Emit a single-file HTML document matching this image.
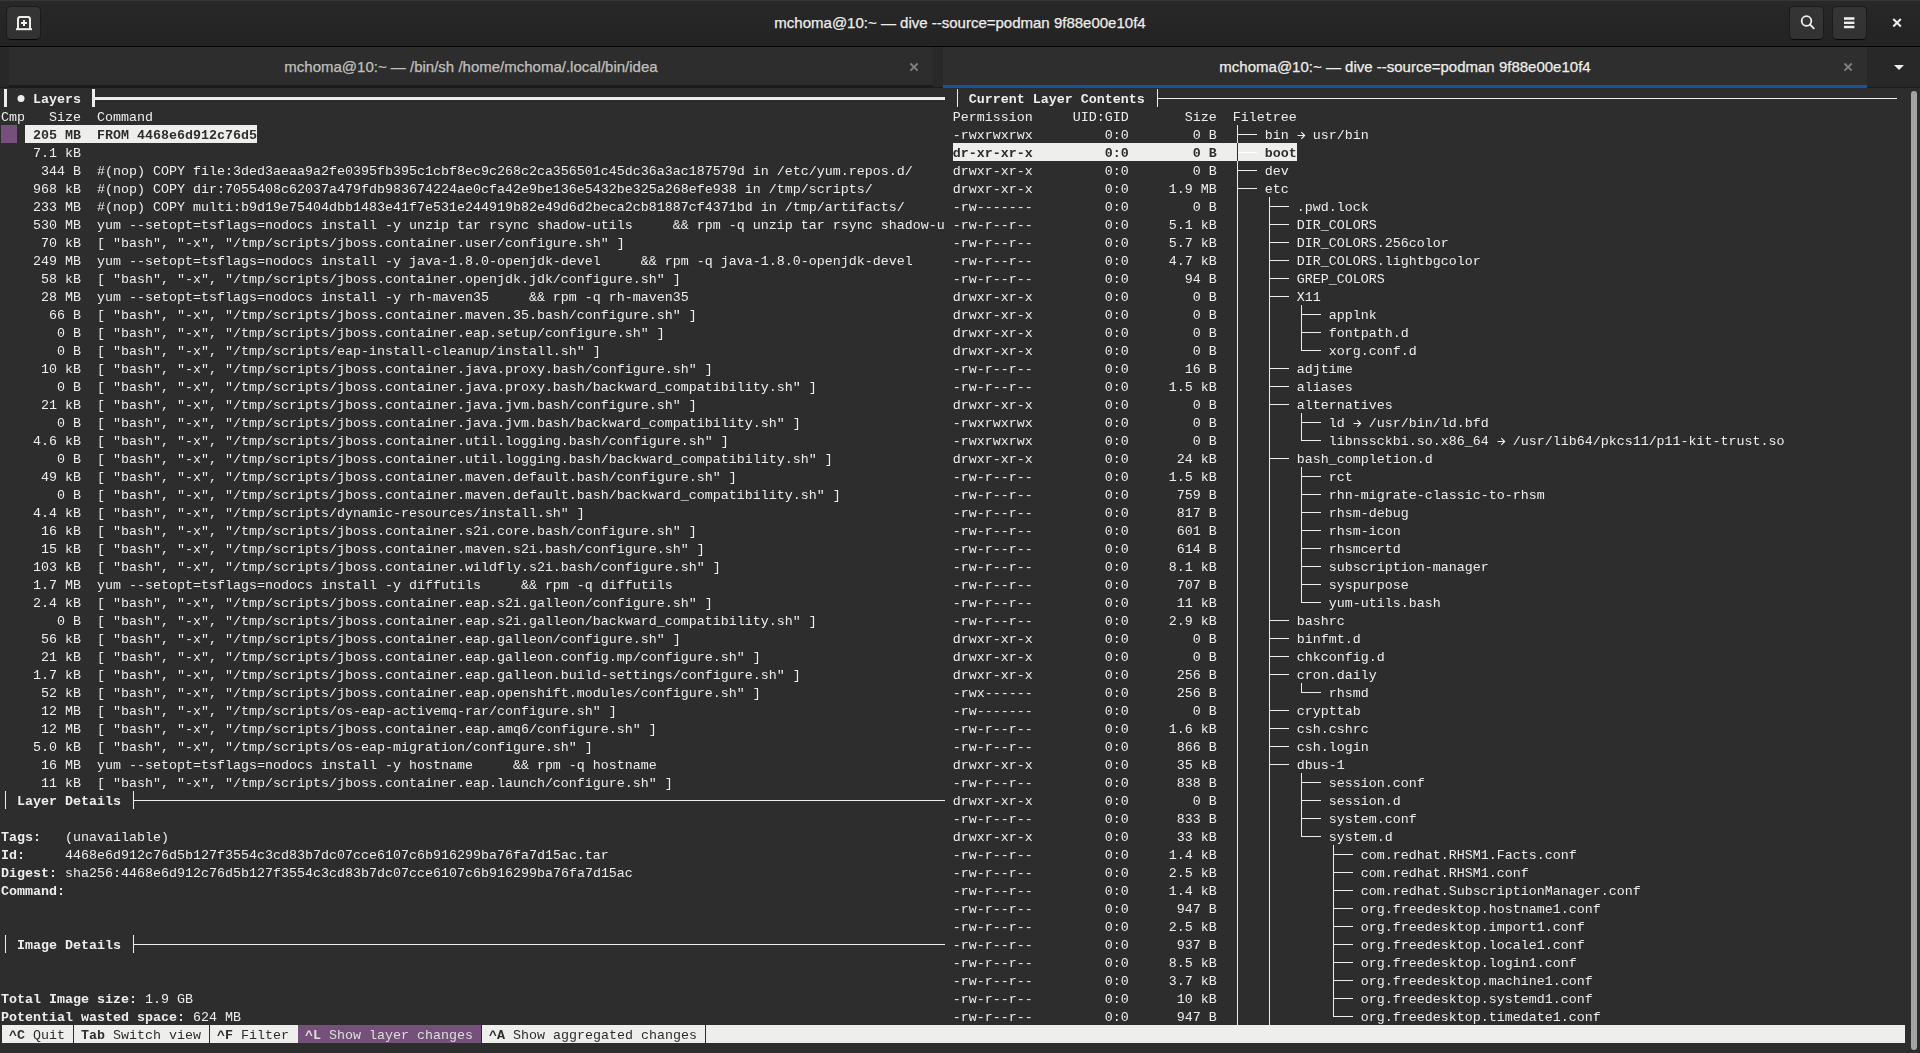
<!DOCTYPE html>
<html><head><meta charset="utf-8">
<style>
html,body{margin:0;padding:0;}
body{width:1920px;height:1053px;overflow:hidden;position:relative;background:#2d2d2d;font-family:"Liberation Sans",sans-serif;}
#hb{position:absolute;left:0;top:0;width:1920px;height:46px;background:linear-gradient(to top,#232323,#282828);border-bottom:1px solid #070707;box-shadow:inset 0 1px rgba(238,238,236,0.07);}
.btn{position:absolute;top:6px;width:33px;height:32px;border:1px solid #1b1b1b;border-bottom-color:#070707;border-radius:5px;background:linear-gradient(to top,#323232 2px,#353535);box-sizing:content-box;}
#title{position:absolute;left:0;top:0;width:1920px;height:46px;line-height:46px;text-align:center;color:#eeeeec;font-size:15px;-webkit-text-stroke:0.25px #eeeeec;}
#tabs{position:absolute;left:0;top:47px;width:1920px;height:41px;background:#282828;box-shadow:inset 0 -1px #1b1b1b;}
.tab{position:absolute;top:0;height:41px;background:#2d2d2d;}
.tabt{position:absolute;top:0;height:38px;line-height:40px;text-align:center;color:#eeeeec;font-size:15px;-webkit-text-stroke:0.25px currentColor;}
#term{position:absolute;left:0;top:88px;width:1920px;height:965px;background:#2d2d2d;}
.row{position:absolute;left:1px;height:18px;line-height:18px;padding-top:2px;white-space:pre;font-family:"Liberation Mono",monospace;font-size:13.332px;color:#eeeeec;}
.b{font-weight:bold;}
.bg{position:absolute;height:18px;}
svg{position:absolute;left:0;top:0;}
</style></head><body>
<div id="hb">
  <div class="btn" style="left:6px"></div>
  <svg width="48" height="46" style="left:0;top:0">
    <path d="M18 29 V19.2 a2.2 2.2 0 0 1 2.2 -2.2 h7.6 a2.2 2.2 0 0 1 2.2 2.2 V29" fill="none" stroke="#eeeeec" stroke-width="2"/>
    <rect x="16" y="28.2" width="16" height="2" fill="#eeeeec"/>
    <rect x="21" y="22" width="6" height="2" fill="#eeeeec"/>
    <rect x="23" y="20" width="2" height="6" fill="#eeeeec"/>
  </svg>
  <div id="title">mchoma@10:~ — dive --source=podman 9f88e00e10f4</div>
  <div class="btn" style="left:1789px"></div>
  <div class="btn" style="left:1832px"></div>
  <svg width="1920" height="46" style="left:0;top:0">
    <g fill="none" stroke="#eeeeec" stroke-width="1.8">
      <circle cx="1806.5" cy="21" r="4.8"/>
      <path d="M1810 24.5 L1813.8 28.3" stroke-linecap="round"/>
    </g>
    <rect x="1844" y="17.2" width="10.4" height="2.6" fill="#eeeeec"/>
    <rect x="1844" y="21.6" width="10.4" height="2.4" fill="#eeeeec"/>
    <rect x="1844" y="25.8" width="10.4" height="2.4" fill="#eeeeec"/>
    <path d="M1893.3 19 L1900.8 26.5 M1900.8 19 L1893.3 26.5" stroke="#eeeeec" stroke-width="2" fill="none"/>
  </svg>
</div>
<div id="tabs">
  <div class="tab" style="left:9px;width:924px;border-bottom:3px solid #1b1b1b;height:38px"></div>
  <div class="tabt" style="left:9px;width:924px;color:#c0c0bd">mchoma@10:~ — /bin/sh /home/mchoma/.local/bin/idea</div>
  <div class="tab" style="left:943px;width:924px;border-bottom:3px solid #15539e;height:38px;background:#2e2e2e"></div>
  <div class="tabt" style="left:943px;width:924px">mchoma@10:~ — dive --source=podman 9f88e00e10f4</div>
  <svg width="1920" height="41" style="left:0;top:0">
    <path d="M910.4 16.5 L917.6 23.7 M917.6 16.5 L910.4 23.7" stroke="#828282" stroke-width="1.8" fill="none"/>
    <path d="M1844.5 16.5 L1851.7 23.7 M1851.7 16.5 L1844.5 23.7" stroke="#828282" stroke-width="1.8" fill="none"/>
    <path d="M1894 18 L1904 18 L1899 23 Z" fill="#eeeeec"/>
  </svg>
</div>
<div id="term">
</div>
<div class="bg" style="left:1px;top:125px;width:16px;background:#75507b"></div>
<div class="bg" style="left:25px;top:125px;width:232px;background:#eeeeec"></div>
<div class="bg" style="left:953px;top:143px;width:344px;background:#eeeeec"></div>
<div class="bg" style="left:1px;top:1025px;width:296px;background:#eeeeec"></div>
<div class="bg" style="left:297px;top:1025px;width:184px;background:#75507b"></div>
<div class="bg" style="left:481px;top:1025px;width:1424px;background:#eeeeec"></div>
<svg width="1920" height="1053" shape-rendering="crispEdges">
<circle cx="21" cy="98.5" r="3.5" fill="#eeeeec" shape-rendering="geometricPrecision"/>
<rect x="4" y="89" width="3" height="18" fill="#eeeeec"/>
<rect x="92" y="89" width="3" height="18" fill="#eeeeec"/>
<rect x="95" y="97" width="2" height="3" fill="#eeeeec"/>
<rect x="97" y="97" width="8" height="3" fill="#eeeeec"/>
<rect x="105" y="97" width="8" height="3" fill="#eeeeec"/>
<rect x="113" y="97" width="8" height="3" fill="#eeeeec"/>
<rect x="121" y="97" width="8" height="3" fill="#eeeeec"/>
<rect x="129" y="97" width="8" height="3" fill="#eeeeec"/>
<rect x="137" y="97" width="8" height="3" fill="#eeeeec"/>
<rect x="145" y="97" width="8" height="3" fill="#eeeeec"/>
<rect x="153" y="97" width="8" height="3" fill="#eeeeec"/>
<rect x="161" y="97" width="8" height="3" fill="#eeeeec"/>
<rect x="169" y="97" width="8" height="3" fill="#eeeeec"/>
<rect x="177" y="97" width="8" height="3" fill="#eeeeec"/>
<rect x="185" y="97" width="8" height="3" fill="#eeeeec"/>
<rect x="193" y="97" width="8" height="3" fill="#eeeeec"/>
<rect x="201" y="97" width="8" height="3" fill="#eeeeec"/>
<rect x="209" y="97" width="8" height="3" fill="#eeeeec"/>
<rect x="217" y="97" width="8" height="3" fill="#eeeeec"/>
<rect x="225" y="97" width="8" height="3" fill="#eeeeec"/>
<rect x="233" y="97" width="8" height="3" fill="#eeeeec"/>
<rect x="241" y="97" width="8" height="3" fill="#eeeeec"/>
<rect x="249" y="97" width="8" height="3" fill="#eeeeec"/>
<rect x="257" y="97" width="8" height="3" fill="#eeeeec"/>
<rect x="265" y="97" width="8" height="3" fill="#eeeeec"/>
<rect x="273" y="97" width="8" height="3" fill="#eeeeec"/>
<rect x="281" y="97" width="8" height="3" fill="#eeeeec"/>
<rect x="289" y="97" width="8" height="3" fill="#eeeeec"/>
<rect x="297" y="97" width="8" height="3" fill="#eeeeec"/>
<rect x="305" y="97" width="8" height="3" fill="#eeeeec"/>
<rect x="313" y="97" width="8" height="3" fill="#eeeeec"/>
<rect x="321" y="97" width="8" height="3" fill="#eeeeec"/>
<rect x="329" y="97" width="8" height="3" fill="#eeeeec"/>
<rect x="337" y="97" width="8" height="3" fill="#eeeeec"/>
<rect x="345" y="97" width="8" height="3" fill="#eeeeec"/>
<rect x="353" y="97" width="8" height="3" fill="#eeeeec"/>
<rect x="361" y="97" width="8" height="3" fill="#eeeeec"/>
<rect x="369" y="97" width="8" height="3" fill="#eeeeec"/>
<rect x="377" y="97" width="8" height="3" fill="#eeeeec"/>
<rect x="385" y="97" width="8" height="3" fill="#eeeeec"/>
<rect x="393" y="97" width="8" height="3" fill="#eeeeec"/>
<rect x="401" y="97" width="8" height="3" fill="#eeeeec"/>
<rect x="409" y="97" width="8" height="3" fill="#eeeeec"/>
<rect x="417" y="97" width="8" height="3" fill="#eeeeec"/>
<rect x="425" y="97" width="8" height="3" fill="#eeeeec"/>
<rect x="433" y="97" width="8" height="3" fill="#eeeeec"/>
<rect x="441" y="97" width="8" height="3" fill="#eeeeec"/>
<rect x="449" y="97" width="8" height="3" fill="#eeeeec"/>
<rect x="457" y="97" width="8" height="3" fill="#eeeeec"/>
<rect x="465" y="97" width="8" height="3" fill="#eeeeec"/>
<rect x="473" y="97" width="8" height="3" fill="#eeeeec"/>
<rect x="481" y="97" width="8" height="3" fill="#eeeeec"/>
<rect x="489" y="97" width="8" height="3" fill="#eeeeec"/>
<rect x="497" y="97" width="8" height="3" fill="#eeeeec"/>
<rect x="505" y="97" width="8" height="3" fill="#eeeeec"/>
<rect x="513" y="97" width="8" height="3" fill="#eeeeec"/>
<rect x="521" y="97" width="8" height="3" fill="#eeeeec"/>
<rect x="529" y="97" width="8" height="3" fill="#eeeeec"/>
<rect x="537" y="97" width="8" height="3" fill="#eeeeec"/>
<rect x="545" y="97" width="8" height="3" fill="#eeeeec"/>
<rect x="553" y="97" width="8" height="3" fill="#eeeeec"/>
<rect x="561" y="97" width="8" height="3" fill="#eeeeec"/>
<rect x="569" y="97" width="8" height="3" fill="#eeeeec"/>
<rect x="577" y="97" width="8" height="3" fill="#eeeeec"/>
<rect x="585" y="97" width="8" height="3" fill="#eeeeec"/>
<rect x="593" y="97" width="8" height="3" fill="#eeeeec"/>
<rect x="601" y="97" width="8" height="3" fill="#eeeeec"/>
<rect x="609" y="97" width="8" height="3" fill="#eeeeec"/>
<rect x="617" y="97" width="8" height="3" fill="#eeeeec"/>
<rect x="625" y="97" width="8" height="3" fill="#eeeeec"/>
<rect x="633" y="97" width="8" height="3" fill="#eeeeec"/>
<rect x="641" y="97" width="8" height="3" fill="#eeeeec"/>
<rect x="649" y="97" width="8" height="3" fill="#eeeeec"/>
<rect x="657" y="97" width="8" height="3" fill="#eeeeec"/>
<rect x="665" y="97" width="8" height="3" fill="#eeeeec"/>
<rect x="673" y="97" width="8" height="3" fill="#eeeeec"/>
<rect x="681" y="97" width="8" height="3" fill="#eeeeec"/>
<rect x="689" y="97" width="8" height="3" fill="#eeeeec"/>
<rect x="697" y="97" width="8" height="3" fill="#eeeeec"/>
<rect x="705" y="97" width="8" height="3" fill="#eeeeec"/>
<rect x="713" y="97" width="8" height="3" fill="#eeeeec"/>
<rect x="721" y="97" width="8" height="3" fill="#eeeeec"/>
<rect x="729" y="97" width="8" height="3" fill="#eeeeec"/>
<rect x="737" y="97" width="8" height="3" fill="#eeeeec"/>
<rect x="745" y="97" width="8" height="3" fill="#eeeeec"/>
<rect x="753" y="97" width="8" height="3" fill="#eeeeec"/>
<rect x="761" y="97" width="8" height="3" fill="#eeeeec"/>
<rect x="769" y="97" width="8" height="3" fill="#eeeeec"/>
<rect x="777" y="97" width="8" height="3" fill="#eeeeec"/>
<rect x="785" y="97" width="8" height="3" fill="#eeeeec"/>
<rect x="793" y="97" width="8" height="3" fill="#eeeeec"/>
<rect x="801" y="97" width="8" height="3" fill="#eeeeec"/>
<rect x="809" y="97" width="8" height="3" fill="#eeeeec"/>
<rect x="817" y="97" width="8" height="3" fill="#eeeeec"/>
<rect x="825" y="97" width="8" height="3" fill="#eeeeec"/>
<rect x="833" y="97" width="8" height="3" fill="#eeeeec"/>
<rect x="841" y="97" width="8" height="3" fill="#eeeeec"/>
<rect x="849" y="97" width="8" height="3" fill="#eeeeec"/>
<rect x="857" y="97" width="8" height="3" fill="#eeeeec"/>
<rect x="865" y="97" width="8" height="3" fill="#eeeeec"/>
<rect x="873" y="97" width="8" height="3" fill="#eeeeec"/>
<rect x="881" y="97" width="8" height="3" fill="#eeeeec"/>
<rect x="889" y="97" width="8" height="3" fill="#eeeeec"/>
<rect x="897" y="97" width="8" height="3" fill="#eeeeec"/>
<rect x="905" y="97" width="8" height="3" fill="#eeeeec"/>
<rect x="913" y="97" width="8" height="3" fill="#eeeeec"/>
<rect x="921" y="97" width="8" height="3" fill="#eeeeec"/>
<rect x="929" y="97" width="8" height="3" fill="#eeeeec"/>
<rect x="937" y="97" width="8" height="3" fill="#eeeeec"/>
<rect x="957" y="89" width="1" height="18" fill="#eeeeec"/>
<rect x="1157" y="89" width="1" height="18" fill="#eeeeec"/>
<rect x="1158" y="98" width="3" height="1" fill="#eeeeec"/>
<rect x="1161" y="98" width="8" height="1" fill="#eeeeec"/>
<rect x="1169" y="98" width="8" height="1" fill="#eeeeec"/>
<rect x="1177" y="98" width="8" height="1" fill="#eeeeec"/>
<rect x="1185" y="98" width="8" height="1" fill="#eeeeec"/>
<rect x="1193" y="98" width="8" height="1" fill="#eeeeec"/>
<rect x="1201" y="98" width="8" height="1" fill="#eeeeec"/>
<rect x="1209" y="98" width="8" height="1" fill="#eeeeec"/>
<rect x="1217" y="98" width="8" height="1" fill="#eeeeec"/>
<rect x="1225" y="98" width="8" height="1" fill="#eeeeec"/>
<rect x="1233" y="98" width="8" height="1" fill="#eeeeec"/>
<rect x="1241" y="98" width="8" height="1" fill="#eeeeec"/>
<rect x="1249" y="98" width="8" height="1" fill="#eeeeec"/>
<rect x="1257" y="98" width="8" height="1" fill="#eeeeec"/>
<rect x="1265" y="98" width="8" height="1" fill="#eeeeec"/>
<rect x="1273" y="98" width="8" height="1" fill="#eeeeec"/>
<rect x="1281" y="98" width="8" height="1" fill="#eeeeec"/>
<rect x="1289" y="98" width="8" height="1" fill="#eeeeec"/>
<rect x="1297" y="98" width="8" height="1" fill="#eeeeec"/>
<rect x="1305" y="98" width="8" height="1" fill="#eeeeec"/>
<rect x="1313" y="98" width="8" height="1" fill="#eeeeec"/>
<rect x="1321" y="98" width="8" height="1" fill="#eeeeec"/>
<rect x="1329" y="98" width="8" height="1" fill="#eeeeec"/>
<rect x="1337" y="98" width="8" height="1" fill="#eeeeec"/>
<rect x="1345" y="98" width="8" height="1" fill="#eeeeec"/>
<rect x="1353" y="98" width="8" height="1" fill="#eeeeec"/>
<rect x="1361" y="98" width="8" height="1" fill="#eeeeec"/>
<rect x="1369" y="98" width="8" height="1" fill="#eeeeec"/>
<rect x="1377" y="98" width="8" height="1" fill="#eeeeec"/>
<rect x="1385" y="98" width="8" height="1" fill="#eeeeec"/>
<rect x="1393" y="98" width="8" height="1" fill="#eeeeec"/>
<rect x="1401" y="98" width="8" height="1" fill="#eeeeec"/>
<rect x="1409" y="98" width="8" height="1" fill="#eeeeec"/>
<rect x="1417" y="98" width="8" height="1" fill="#eeeeec"/>
<rect x="1425" y="98" width="8" height="1" fill="#eeeeec"/>
<rect x="1433" y="98" width="8" height="1" fill="#eeeeec"/>
<rect x="1441" y="98" width="8" height="1" fill="#eeeeec"/>
<rect x="1449" y="98" width="8" height="1" fill="#eeeeec"/>
<rect x="1457" y="98" width="8" height="1" fill="#eeeeec"/>
<rect x="1465" y="98" width="8" height="1" fill="#eeeeec"/>
<rect x="1473" y="98" width="8" height="1" fill="#eeeeec"/>
<rect x="1481" y="98" width="8" height="1" fill="#eeeeec"/>
<rect x="1489" y="98" width="8" height="1" fill="#eeeeec"/>
<rect x="1497" y="98" width="8" height="1" fill="#eeeeec"/>
<rect x="1505" y="98" width="8" height="1" fill="#eeeeec"/>
<rect x="1513" y="98" width="8" height="1" fill="#eeeeec"/>
<rect x="1521" y="98" width="8" height="1" fill="#eeeeec"/>
<rect x="1529" y="98" width="8" height="1" fill="#eeeeec"/>
<rect x="1537" y="98" width="8" height="1" fill="#eeeeec"/>
<rect x="1545" y="98" width="8" height="1" fill="#eeeeec"/>
<rect x="1553" y="98" width="8" height="1" fill="#eeeeec"/>
<rect x="1561" y="98" width="8" height="1" fill="#eeeeec"/>
<rect x="1569" y="98" width="8" height="1" fill="#eeeeec"/>
<rect x="1577" y="98" width="8" height="1" fill="#eeeeec"/>
<rect x="1585" y="98" width="8" height="1" fill="#eeeeec"/>
<rect x="1593" y="98" width="8" height="1" fill="#eeeeec"/>
<rect x="1601" y="98" width="8" height="1" fill="#eeeeec"/>
<rect x="1609" y="98" width="8" height="1" fill="#eeeeec"/>
<rect x="1617" y="98" width="8" height="1" fill="#eeeeec"/>
<rect x="1625" y="98" width="8" height="1" fill="#eeeeec"/>
<rect x="1633" y="98" width="8" height="1" fill="#eeeeec"/>
<rect x="1641" y="98" width="8" height="1" fill="#eeeeec"/>
<rect x="1649" y="98" width="8" height="1" fill="#eeeeec"/>
<rect x="1657" y="98" width="8" height="1" fill="#eeeeec"/>
<rect x="1665" y="98" width="8" height="1" fill="#eeeeec"/>
<rect x="1673" y="98" width="8" height="1" fill="#eeeeec"/>
<rect x="1681" y="98" width="8" height="1" fill="#eeeeec"/>
<rect x="1689" y="98" width="8" height="1" fill="#eeeeec"/>
<rect x="1697" y="98" width="8" height="1" fill="#eeeeec"/>
<rect x="1705" y="98" width="8" height="1" fill="#eeeeec"/>
<rect x="1713" y="98" width="8" height="1" fill="#eeeeec"/>
<rect x="1721" y="98" width="8" height="1" fill="#eeeeec"/>
<rect x="1729" y="98" width="8" height="1" fill="#eeeeec"/>
<rect x="1737" y="98" width="8" height="1" fill="#eeeeec"/>
<rect x="1745" y="98" width="8" height="1" fill="#eeeeec"/>
<rect x="1753" y="98" width="8" height="1" fill="#eeeeec"/>
<rect x="1761" y="98" width="8" height="1" fill="#eeeeec"/>
<rect x="1769" y="98" width="8" height="1" fill="#eeeeec"/>
<rect x="1777" y="98" width="8" height="1" fill="#eeeeec"/>
<rect x="1785" y="98" width="8" height="1" fill="#eeeeec"/>
<rect x="1793" y="98" width="8" height="1" fill="#eeeeec"/>
<rect x="1801" y="98" width="8" height="1" fill="#eeeeec"/>
<rect x="1809" y="98" width="8" height="1" fill="#eeeeec"/>
<rect x="1817" y="98" width="8" height="1" fill="#eeeeec"/>
<rect x="1825" y="98" width="8" height="1" fill="#eeeeec"/>
<rect x="1833" y="98" width="8" height="1" fill="#eeeeec"/>
<rect x="1841" y="98" width="8" height="1" fill="#eeeeec"/>
<rect x="1849" y="98" width="8" height="1" fill="#eeeeec"/>
<rect x="1857" y="98" width="8" height="1" fill="#eeeeec"/>
<rect x="1865" y="98" width="8" height="1" fill="#eeeeec"/>
<rect x="1873" y="98" width="8" height="1" fill="#eeeeec"/>
<rect x="1881" y="98" width="8" height="1" fill="#eeeeec"/>
<rect x="1889" y="98" width="8" height="1" fill="#eeeeec"/>
<rect x="1237" y="125" width="1" height="18" fill="#eeeeec"/>
<rect x="1238" y="134" width="3" height="1" fill="#eeeeec"/>
<rect x="1241" y="134" width="8" height="1" fill="#eeeeec"/>
<rect x="1249" y="134" width="8" height="1" fill="#eeeeec"/>
<path d="M1297.5 135.5 H1304.5 M1301.3 132.2 L1304.6 135.5 L1301.3 138.8" stroke="#eeeeec" stroke-width="1.2" fill="none" shape-rendering="geometricPrecision"/>
<rect x="1237" y="143" width="1" height="18" fill="#2d2d2d"/>
<rect x="1238" y="152" width="3" height="1" fill="#ffffff"/>
<rect x="1241" y="152" width="8" height="1" fill="#ffffff"/>
<rect x="1249" y="152" width="8" height="1" fill="#ffffff"/>
<rect x="1237" y="161" width="1" height="18" fill="#eeeeec"/>
<rect x="1238" y="170" width="3" height="1" fill="#eeeeec"/>
<rect x="1241" y="170" width="8" height="1" fill="#eeeeec"/>
<rect x="1249" y="170" width="8" height="1" fill="#eeeeec"/>
<rect x="1237" y="179" width="1" height="18" fill="#eeeeec"/>
<rect x="1238" y="188" width="3" height="1" fill="#eeeeec"/>
<rect x="1241" y="188" width="8" height="1" fill="#eeeeec"/>
<rect x="1249" y="188" width="8" height="1" fill="#eeeeec"/>
<rect x="1237" y="197" width="1" height="18" fill="#eeeeec"/>
<rect x="1269" y="197" width="1" height="18" fill="#eeeeec"/>
<rect x="1270" y="206" width="3" height="1" fill="#eeeeec"/>
<rect x="1273" y="206" width="8" height="1" fill="#eeeeec"/>
<rect x="1281" y="206" width="8" height="1" fill="#eeeeec"/>
<rect x="1237" y="215" width="1" height="18" fill="#eeeeec"/>
<rect x="1269" y="215" width="1" height="18" fill="#eeeeec"/>
<rect x="1270" y="224" width="3" height="1" fill="#eeeeec"/>
<rect x="1273" y="224" width="8" height="1" fill="#eeeeec"/>
<rect x="1281" y="224" width="8" height="1" fill="#eeeeec"/>
<rect x="1237" y="233" width="1" height="18" fill="#eeeeec"/>
<rect x="1269" y="233" width="1" height="18" fill="#eeeeec"/>
<rect x="1270" y="242" width="3" height="1" fill="#eeeeec"/>
<rect x="1273" y="242" width="8" height="1" fill="#eeeeec"/>
<rect x="1281" y="242" width="8" height="1" fill="#eeeeec"/>
<rect x="1237" y="251" width="1" height="18" fill="#eeeeec"/>
<rect x="1269" y="251" width="1" height="18" fill="#eeeeec"/>
<rect x="1270" y="260" width="3" height="1" fill="#eeeeec"/>
<rect x="1273" y="260" width="8" height="1" fill="#eeeeec"/>
<rect x="1281" y="260" width="8" height="1" fill="#eeeeec"/>
<rect x="1237" y="269" width="1" height="18" fill="#eeeeec"/>
<rect x="1269" y="269" width="1" height="18" fill="#eeeeec"/>
<rect x="1270" y="278" width="3" height="1" fill="#eeeeec"/>
<rect x="1273" y="278" width="8" height="1" fill="#eeeeec"/>
<rect x="1281" y="278" width="8" height="1" fill="#eeeeec"/>
<rect x="1237" y="287" width="1" height="18" fill="#eeeeec"/>
<rect x="1269" y="287" width="1" height="18" fill="#eeeeec"/>
<rect x="1270" y="296" width="3" height="1" fill="#eeeeec"/>
<rect x="1273" y="296" width="8" height="1" fill="#eeeeec"/>
<rect x="1281" y="296" width="8" height="1" fill="#eeeeec"/>
<rect x="1237" y="305" width="1" height="18" fill="#eeeeec"/>
<rect x="1269" y="305" width="1" height="18" fill="#eeeeec"/>
<rect x="1301" y="305" width="1" height="18" fill="#eeeeec"/>
<rect x="1302" y="314" width="3" height="1" fill="#eeeeec"/>
<rect x="1305" y="314" width="8" height="1" fill="#eeeeec"/>
<rect x="1313" y="314" width="8" height="1" fill="#eeeeec"/>
<rect x="1237" y="323" width="1" height="18" fill="#eeeeec"/>
<rect x="1269" y="323" width="1" height="18" fill="#eeeeec"/>
<rect x="1301" y="323" width="1" height="18" fill="#eeeeec"/>
<rect x="1302" y="332" width="3" height="1" fill="#eeeeec"/>
<rect x="1305" y="332" width="8" height="1" fill="#eeeeec"/>
<rect x="1313" y="332" width="8" height="1" fill="#eeeeec"/>
<rect x="1237" y="341" width="1" height="18" fill="#eeeeec"/>
<rect x="1269" y="341" width="1" height="18" fill="#eeeeec"/>
<rect x="1301" y="341" width="1" height="10" fill="#eeeeec"/>
<rect x="1302" y="350" width="3" height="1" fill="#eeeeec"/>
<rect x="1305" y="350" width="8" height="1" fill="#eeeeec"/>
<rect x="1313" y="350" width="8" height="1" fill="#eeeeec"/>
<rect x="1237" y="359" width="1" height="18" fill="#eeeeec"/>
<rect x="1269" y="359" width="1" height="18" fill="#eeeeec"/>
<rect x="1270" y="368" width="3" height="1" fill="#eeeeec"/>
<rect x="1273" y="368" width="8" height="1" fill="#eeeeec"/>
<rect x="1281" y="368" width="8" height="1" fill="#eeeeec"/>
<rect x="1237" y="377" width="1" height="18" fill="#eeeeec"/>
<rect x="1269" y="377" width="1" height="18" fill="#eeeeec"/>
<rect x="1270" y="386" width="3" height="1" fill="#eeeeec"/>
<rect x="1273" y="386" width="8" height="1" fill="#eeeeec"/>
<rect x="1281" y="386" width="8" height="1" fill="#eeeeec"/>
<rect x="1237" y="395" width="1" height="18" fill="#eeeeec"/>
<rect x="1269" y="395" width="1" height="18" fill="#eeeeec"/>
<rect x="1270" y="404" width="3" height="1" fill="#eeeeec"/>
<rect x="1273" y="404" width="8" height="1" fill="#eeeeec"/>
<rect x="1281" y="404" width="8" height="1" fill="#eeeeec"/>
<rect x="1237" y="413" width="1" height="18" fill="#eeeeec"/>
<rect x="1269" y="413" width="1" height="18" fill="#eeeeec"/>
<rect x="1301" y="413" width="1" height="18" fill="#eeeeec"/>
<rect x="1302" y="422" width="3" height="1" fill="#eeeeec"/>
<rect x="1305" y="422" width="8" height="1" fill="#eeeeec"/>
<rect x="1313" y="422" width="8" height="1" fill="#eeeeec"/>
<path d="M1353.5 423.5 H1360.5 M1357.3 420.2 L1360.6 423.5 L1357.3 426.8" stroke="#eeeeec" stroke-width="1.2" fill="none" shape-rendering="geometricPrecision"/>
<rect x="1237" y="431" width="1" height="18" fill="#eeeeec"/>
<rect x="1269" y="431" width="1" height="18" fill="#eeeeec"/>
<rect x="1301" y="431" width="1" height="10" fill="#eeeeec"/>
<rect x="1302" y="440" width="3" height="1" fill="#eeeeec"/>
<rect x="1305" y="440" width="8" height="1" fill="#eeeeec"/>
<rect x="1313" y="440" width="8" height="1" fill="#eeeeec"/>
<path d="M1497.5 441.5 H1504.5 M1501.3 438.2 L1504.6 441.5 L1501.3 444.8" stroke="#eeeeec" stroke-width="1.2" fill="none" shape-rendering="geometricPrecision"/>
<rect x="1237" y="449" width="1" height="18" fill="#eeeeec"/>
<rect x="1269" y="449" width="1" height="18" fill="#eeeeec"/>
<rect x="1270" y="458" width="3" height="1" fill="#eeeeec"/>
<rect x="1273" y="458" width="8" height="1" fill="#eeeeec"/>
<rect x="1281" y="458" width="8" height="1" fill="#eeeeec"/>
<rect x="1237" y="467" width="1" height="18" fill="#eeeeec"/>
<rect x="1269" y="467" width="1" height="18" fill="#eeeeec"/>
<rect x="1301" y="467" width="1" height="18" fill="#eeeeec"/>
<rect x="1302" y="476" width="3" height="1" fill="#eeeeec"/>
<rect x="1305" y="476" width="8" height="1" fill="#eeeeec"/>
<rect x="1313" y="476" width="8" height="1" fill="#eeeeec"/>
<rect x="1237" y="485" width="1" height="18" fill="#eeeeec"/>
<rect x="1269" y="485" width="1" height="18" fill="#eeeeec"/>
<rect x="1301" y="485" width="1" height="18" fill="#eeeeec"/>
<rect x="1302" y="494" width="3" height="1" fill="#eeeeec"/>
<rect x="1305" y="494" width="8" height="1" fill="#eeeeec"/>
<rect x="1313" y="494" width="8" height="1" fill="#eeeeec"/>
<rect x="1237" y="503" width="1" height="18" fill="#eeeeec"/>
<rect x="1269" y="503" width="1" height="18" fill="#eeeeec"/>
<rect x="1301" y="503" width="1" height="18" fill="#eeeeec"/>
<rect x="1302" y="512" width="3" height="1" fill="#eeeeec"/>
<rect x="1305" y="512" width="8" height="1" fill="#eeeeec"/>
<rect x="1313" y="512" width="8" height="1" fill="#eeeeec"/>
<rect x="1237" y="521" width="1" height="18" fill="#eeeeec"/>
<rect x="1269" y="521" width="1" height="18" fill="#eeeeec"/>
<rect x="1301" y="521" width="1" height="18" fill="#eeeeec"/>
<rect x="1302" y="530" width="3" height="1" fill="#eeeeec"/>
<rect x="1305" y="530" width="8" height="1" fill="#eeeeec"/>
<rect x="1313" y="530" width="8" height="1" fill="#eeeeec"/>
<rect x="1237" y="539" width="1" height="18" fill="#eeeeec"/>
<rect x="1269" y="539" width="1" height="18" fill="#eeeeec"/>
<rect x="1301" y="539" width="1" height="18" fill="#eeeeec"/>
<rect x="1302" y="548" width="3" height="1" fill="#eeeeec"/>
<rect x="1305" y="548" width="8" height="1" fill="#eeeeec"/>
<rect x="1313" y="548" width="8" height="1" fill="#eeeeec"/>
<rect x="1237" y="557" width="1" height="18" fill="#eeeeec"/>
<rect x="1269" y="557" width="1" height="18" fill="#eeeeec"/>
<rect x="1301" y="557" width="1" height="18" fill="#eeeeec"/>
<rect x="1302" y="566" width="3" height="1" fill="#eeeeec"/>
<rect x="1305" y="566" width="8" height="1" fill="#eeeeec"/>
<rect x="1313" y="566" width="8" height="1" fill="#eeeeec"/>
<rect x="1237" y="575" width="1" height="18" fill="#eeeeec"/>
<rect x="1269" y="575" width="1" height="18" fill="#eeeeec"/>
<rect x="1301" y="575" width="1" height="18" fill="#eeeeec"/>
<rect x="1302" y="584" width="3" height="1" fill="#eeeeec"/>
<rect x="1305" y="584" width="8" height="1" fill="#eeeeec"/>
<rect x="1313" y="584" width="8" height="1" fill="#eeeeec"/>
<rect x="1237" y="593" width="1" height="18" fill="#eeeeec"/>
<rect x="1269" y="593" width="1" height="18" fill="#eeeeec"/>
<rect x="1301" y="593" width="1" height="10" fill="#eeeeec"/>
<rect x="1302" y="602" width="3" height="1" fill="#eeeeec"/>
<rect x="1305" y="602" width="8" height="1" fill="#eeeeec"/>
<rect x="1313" y="602" width="8" height="1" fill="#eeeeec"/>
<rect x="1237" y="611" width="1" height="18" fill="#eeeeec"/>
<rect x="1269" y="611" width="1" height="18" fill="#eeeeec"/>
<rect x="1270" y="620" width="3" height="1" fill="#eeeeec"/>
<rect x="1273" y="620" width="8" height="1" fill="#eeeeec"/>
<rect x="1281" y="620" width="8" height="1" fill="#eeeeec"/>
<rect x="1237" y="629" width="1" height="18" fill="#eeeeec"/>
<rect x="1269" y="629" width="1" height="18" fill="#eeeeec"/>
<rect x="1270" y="638" width="3" height="1" fill="#eeeeec"/>
<rect x="1273" y="638" width="8" height="1" fill="#eeeeec"/>
<rect x="1281" y="638" width="8" height="1" fill="#eeeeec"/>
<rect x="1237" y="647" width="1" height="18" fill="#eeeeec"/>
<rect x="1269" y="647" width="1" height="18" fill="#eeeeec"/>
<rect x="1270" y="656" width="3" height="1" fill="#eeeeec"/>
<rect x="1273" y="656" width="8" height="1" fill="#eeeeec"/>
<rect x="1281" y="656" width="8" height="1" fill="#eeeeec"/>
<rect x="1237" y="665" width="1" height="18" fill="#eeeeec"/>
<rect x="1269" y="665" width="1" height="18" fill="#eeeeec"/>
<rect x="1270" y="674" width="3" height="1" fill="#eeeeec"/>
<rect x="1273" y="674" width="8" height="1" fill="#eeeeec"/>
<rect x="1281" y="674" width="8" height="1" fill="#eeeeec"/>
<rect x="1237" y="683" width="1" height="18" fill="#eeeeec"/>
<rect x="1269" y="683" width="1" height="18" fill="#eeeeec"/>
<rect x="1301" y="683" width="1" height="10" fill="#eeeeec"/>
<rect x="1302" y="692" width="3" height="1" fill="#eeeeec"/>
<rect x="1305" y="692" width="8" height="1" fill="#eeeeec"/>
<rect x="1313" y="692" width="8" height="1" fill="#eeeeec"/>
<rect x="1237" y="701" width="1" height="18" fill="#eeeeec"/>
<rect x="1269" y="701" width="1" height="18" fill="#eeeeec"/>
<rect x="1270" y="710" width="3" height="1" fill="#eeeeec"/>
<rect x="1273" y="710" width="8" height="1" fill="#eeeeec"/>
<rect x="1281" y="710" width="8" height="1" fill="#eeeeec"/>
<rect x="1237" y="719" width="1" height="18" fill="#eeeeec"/>
<rect x="1269" y="719" width="1" height="18" fill="#eeeeec"/>
<rect x="1270" y="728" width="3" height="1" fill="#eeeeec"/>
<rect x="1273" y="728" width="8" height="1" fill="#eeeeec"/>
<rect x="1281" y="728" width="8" height="1" fill="#eeeeec"/>
<rect x="1237" y="737" width="1" height="18" fill="#eeeeec"/>
<rect x="1269" y="737" width="1" height="18" fill="#eeeeec"/>
<rect x="1270" y="746" width="3" height="1" fill="#eeeeec"/>
<rect x="1273" y="746" width="8" height="1" fill="#eeeeec"/>
<rect x="1281" y="746" width="8" height="1" fill="#eeeeec"/>
<rect x="1237" y="755" width="1" height="18" fill="#eeeeec"/>
<rect x="1269" y="755" width="1" height="18" fill="#eeeeec"/>
<rect x="1270" y="764" width="3" height="1" fill="#eeeeec"/>
<rect x="1273" y="764" width="8" height="1" fill="#eeeeec"/>
<rect x="1281" y="764" width="8" height="1" fill="#eeeeec"/>
<rect x="1237" y="773" width="1" height="18" fill="#eeeeec"/>
<rect x="1269" y="773" width="1" height="18" fill="#eeeeec"/>
<rect x="1301" y="773" width="1" height="18" fill="#eeeeec"/>
<rect x="1302" y="782" width="3" height="1" fill="#eeeeec"/>
<rect x="1305" y="782" width="8" height="1" fill="#eeeeec"/>
<rect x="1313" y="782" width="8" height="1" fill="#eeeeec"/>
<rect x="5" y="791" width="1" height="18" fill="#eeeeec"/>
<rect x="133" y="791" width="1" height="18" fill="#eeeeec"/>
<rect x="134" y="800" width="3" height="1" fill="#eeeeec"/>
<rect x="137" y="800" width="8" height="1" fill="#eeeeec"/>
<rect x="145" y="800" width="8" height="1" fill="#eeeeec"/>
<rect x="153" y="800" width="8" height="1" fill="#eeeeec"/>
<rect x="161" y="800" width="8" height="1" fill="#eeeeec"/>
<rect x="169" y="800" width="8" height="1" fill="#eeeeec"/>
<rect x="177" y="800" width="8" height="1" fill="#eeeeec"/>
<rect x="185" y="800" width="8" height="1" fill="#eeeeec"/>
<rect x="193" y="800" width="8" height="1" fill="#eeeeec"/>
<rect x="201" y="800" width="8" height="1" fill="#eeeeec"/>
<rect x="209" y="800" width="8" height="1" fill="#eeeeec"/>
<rect x="217" y="800" width="8" height="1" fill="#eeeeec"/>
<rect x="225" y="800" width="8" height="1" fill="#eeeeec"/>
<rect x="233" y="800" width="8" height="1" fill="#eeeeec"/>
<rect x="241" y="800" width="8" height="1" fill="#eeeeec"/>
<rect x="249" y="800" width="8" height="1" fill="#eeeeec"/>
<rect x="257" y="800" width="8" height="1" fill="#eeeeec"/>
<rect x="265" y="800" width="8" height="1" fill="#eeeeec"/>
<rect x="273" y="800" width="8" height="1" fill="#eeeeec"/>
<rect x="281" y="800" width="8" height="1" fill="#eeeeec"/>
<rect x="289" y="800" width="8" height="1" fill="#eeeeec"/>
<rect x="297" y="800" width="8" height="1" fill="#eeeeec"/>
<rect x="305" y="800" width="8" height="1" fill="#eeeeec"/>
<rect x="313" y="800" width="8" height="1" fill="#eeeeec"/>
<rect x="321" y="800" width="8" height="1" fill="#eeeeec"/>
<rect x="329" y="800" width="8" height="1" fill="#eeeeec"/>
<rect x="337" y="800" width="8" height="1" fill="#eeeeec"/>
<rect x="345" y="800" width="8" height="1" fill="#eeeeec"/>
<rect x="353" y="800" width="8" height="1" fill="#eeeeec"/>
<rect x="361" y="800" width="8" height="1" fill="#eeeeec"/>
<rect x="369" y="800" width="8" height="1" fill="#eeeeec"/>
<rect x="377" y="800" width="8" height="1" fill="#eeeeec"/>
<rect x="385" y="800" width="8" height="1" fill="#eeeeec"/>
<rect x="393" y="800" width="8" height="1" fill="#eeeeec"/>
<rect x="401" y="800" width="8" height="1" fill="#eeeeec"/>
<rect x="409" y="800" width="8" height="1" fill="#eeeeec"/>
<rect x="417" y="800" width="8" height="1" fill="#eeeeec"/>
<rect x="425" y="800" width="8" height="1" fill="#eeeeec"/>
<rect x="433" y="800" width="8" height="1" fill="#eeeeec"/>
<rect x="441" y="800" width="8" height="1" fill="#eeeeec"/>
<rect x="449" y="800" width="8" height="1" fill="#eeeeec"/>
<rect x="457" y="800" width="8" height="1" fill="#eeeeec"/>
<rect x="465" y="800" width="8" height="1" fill="#eeeeec"/>
<rect x="473" y="800" width="8" height="1" fill="#eeeeec"/>
<rect x="481" y="800" width="8" height="1" fill="#eeeeec"/>
<rect x="489" y="800" width="8" height="1" fill="#eeeeec"/>
<rect x="497" y="800" width="8" height="1" fill="#eeeeec"/>
<rect x="505" y="800" width="8" height="1" fill="#eeeeec"/>
<rect x="513" y="800" width="8" height="1" fill="#eeeeec"/>
<rect x="521" y="800" width="8" height="1" fill="#eeeeec"/>
<rect x="529" y="800" width="8" height="1" fill="#eeeeec"/>
<rect x="537" y="800" width="8" height="1" fill="#eeeeec"/>
<rect x="545" y="800" width="8" height="1" fill="#eeeeec"/>
<rect x="553" y="800" width="8" height="1" fill="#eeeeec"/>
<rect x="561" y="800" width="8" height="1" fill="#eeeeec"/>
<rect x="569" y="800" width="8" height="1" fill="#eeeeec"/>
<rect x="577" y="800" width="8" height="1" fill="#eeeeec"/>
<rect x="585" y="800" width="8" height="1" fill="#eeeeec"/>
<rect x="593" y="800" width="8" height="1" fill="#eeeeec"/>
<rect x="601" y="800" width="8" height="1" fill="#eeeeec"/>
<rect x="609" y="800" width="8" height="1" fill="#eeeeec"/>
<rect x="617" y="800" width="8" height="1" fill="#eeeeec"/>
<rect x="625" y="800" width="8" height="1" fill="#eeeeec"/>
<rect x="633" y="800" width="8" height="1" fill="#eeeeec"/>
<rect x="641" y="800" width="8" height="1" fill="#eeeeec"/>
<rect x="649" y="800" width="8" height="1" fill="#eeeeec"/>
<rect x="657" y="800" width="8" height="1" fill="#eeeeec"/>
<rect x="665" y="800" width="8" height="1" fill="#eeeeec"/>
<rect x="673" y="800" width="8" height="1" fill="#eeeeec"/>
<rect x="681" y="800" width="8" height="1" fill="#eeeeec"/>
<rect x="689" y="800" width="8" height="1" fill="#eeeeec"/>
<rect x="697" y="800" width="8" height="1" fill="#eeeeec"/>
<rect x="705" y="800" width="8" height="1" fill="#eeeeec"/>
<rect x="713" y="800" width="8" height="1" fill="#eeeeec"/>
<rect x="721" y="800" width="8" height="1" fill="#eeeeec"/>
<rect x="729" y="800" width="8" height="1" fill="#eeeeec"/>
<rect x="737" y="800" width="8" height="1" fill="#eeeeec"/>
<rect x="745" y="800" width="8" height="1" fill="#eeeeec"/>
<rect x="753" y="800" width="8" height="1" fill="#eeeeec"/>
<rect x="761" y="800" width="8" height="1" fill="#eeeeec"/>
<rect x="769" y="800" width="8" height="1" fill="#eeeeec"/>
<rect x="777" y="800" width="8" height="1" fill="#eeeeec"/>
<rect x="785" y="800" width="8" height="1" fill="#eeeeec"/>
<rect x="793" y="800" width="8" height="1" fill="#eeeeec"/>
<rect x="801" y="800" width="8" height="1" fill="#eeeeec"/>
<rect x="809" y="800" width="8" height="1" fill="#eeeeec"/>
<rect x="817" y="800" width="8" height="1" fill="#eeeeec"/>
<rect x="825" y="800" width="8" height="1" fill="#eeeeec"/>
<rect x="833" y="800" width="8" height="1" fill="#eeeeec"/>
<rect x="841" y="800" width="8" height="1" fill="#eeeeec"/>
<rect x="849" y="800" width="8" height="1" fill="#eeeeec"/>
<rect x="857" y="800" width="8" height="1" fill="#eeeeec"/>
<rect x="865" y="800" width="8" height="1" fill="#eeeeec"/>
<rect x="873" y="800" width="8" height="1" fill="#eeeeec"/>
<rect x="881" y="800" width="8" height="1" fill="#eeeeec"/>
<rect x="889" y="800" width="8" height="1" fill="#eeeeec"/>
<rect x="897" y="800" width="8" height="1" fill="#eeeeec"/>
<rect x="905" y="800" width="8" height="1" fill="#eeeeec"/>
<rect x="913" y="800" width="8" height="1" fill="#eeeeec"/>
<rect x="921" y="800" width="8" height="1" fill="#eeeeec"/>
<rect x="929" y="800" width="8" height="1" fill="#eeeeec"/>
<rect x="937" y="800" width="8" height="1" fill="#eeeeec"/>
<rect x="1237" y="791" width="1" height="18" fill="#eeeeec"/>
<rect x="1269" y="791" width="1" height="18" fill="#eeeeec"/>
<rect x="1301" y="791" width="1" height="18" fill="#eeeeec"/>
<rect x="1302" y="800" width="3" height="1" fill="#eeeeec"/>
<rect x="1305" y="800" width="8" height="1" fill="#eeeeec"/>
<rect x="1313" y="800" width="8" height="1" fill="#eeeeec"/>
<rect x="1237" y="809" width="1" height="18" fill="#eeeeec"/>
<rect x="1269" y="809" width="1" height="18" fill="#eeeeec"/>
<rect x="1301" y="809" width="1" height="18" fill="#eeeeec"/>
<rect x="1302" y="818" width="3" height="1" fill="#eeeeec"/>
<rect x="1305" y="818" width="8" height="1" fill="#eeeeec"/>
<rect x="1313" y="818" width="8" height="1" fill="#eeeeec"/>
<rect x="1237" y="827" width="1" height="18" fill="#eeeeec"/>
<rect x="1269" y="827" width="1" height="18" fill="#eeeeec"/>
<rect x="1301" y="827" width="1" height="10" fill="#eeeeec"/>
<rect x="1302" y="836" width="3" height="1" fill="#eeeeec"/>
<rect x="1305" y="836" width="8" height="1" fill="#eeeeec"/>
<rect x="1313" y="836" width="8" height="1" fill="#eeeeec"/>
<rect x="1237" y="845" width="1" height="18" fill="#eeeeec"/>
<rect x="1269" y="845" width="1" height="18" fill="#eeeeec"/>
<rect x="1333" y="845" width="1" height="18" fill="#eeeeec"/>
<rect x="1334" y="854" width="3" height="1" fill="#eeeeec"/>
<rect x="1337" y="854" width="8" height="1" fill="#eeeeec"/>
<rect x="1345" y="854" width="8" height="1" fill="#eeeeec"/>
<rect x="1237" y="863" width="1" height="18" fill="#eeeeec"/>
<rect x="1269" y="863" width="1" height="18" fill="#eeeeec"/>
<rect x="1333" y="863" width="1" height="18" fill="#eeeeec"/>
<rect x="1334" y="872" width="3" height="1" fill="#eeeeec"/>
<rect x="1337" y="872" width="8" height="1" fill="#eeeeec"/>
<rect x="1345" y="872" width="8" height="1" fill="#eeeeec"/>
<rect x="1237" y="881" width="1" height="18" fill="#eeeeec"/>
<rect x="1269" y="881" width="1" height="18" fill="#eeeeec"/>
<rect x="1333" y="881" width="1" height="18" fill="#eeeeec"/>
<rect x="1334" y="890" width="3" height="1" fill="#eeeeec"/>
<rect x="1337" y="890" width="8" height="1" fill="#eeeeec"/>
<rect x="1345" y="890" width="8" height="1" fill="#eeeeec"/>
<rect x="1237" y="899" width="1" height="18" fill="#eeeeec"/>
<rect x="1269" y="899" width="1" height="18" fill="#eeeeec"/>
<rect x="1333" y="899" width="1" height="18" fill="#eeeeec"/>
<rect x="1334" y="908" width="3" height="1" fill="#eeeeec"/>
<rect x="1337" y="908" width="8" height="1" fill="#eeeeec"/>
<rect x="1345" y="908" width="8" height="1" fill="#eeeeec"/>
<rect x="1237" y="917" width="1" height="18" fill="#eeeeec"/>
<rect x="1269" y="917" width="1" height="18" fill="#eeeeec"/>
<rect x="1333" y="917" width="1" height="18" fill="#eeeeec"/>
<rect x="1334" y="926" width="3" height="1" fill="#eeeeec"/>
<rect x="1337" y="926" width="8" height="1" fill="#eeeeec"/>
<rect x="1345" y="926" width="8" height="1" fill="#eeeeec"/>
<rect x="5" y="935" width="1" height="18" fill="#eeeeec"/>
<rect x="133" y="935" width="1" height="18" fill="#eeeeec"/>
<rect x="134" y="944" width="3" height="1" fill="#eeeeec"/>
<rect x="137" y="944" width="8" height="1" fill="#eeeeec"/>
<rect x="145" y="944" width="8" height="1" fill="#eeeeec"/>
<rect x="153" y="944" width="8" height="1" fill="#eeeeec"/>
<rect x="161" y="944" width="8" height="1" fill="#eeeeec"/>
<rect x="169" y="944" width="8" height="1" fill="#eeeeec"/>
<rect x="177" y="944" width="8" height="1" fill="#eeeeec"/>
<rect x="185" y="944" width="8" height="1" fill="#eeeeec"/>
<rect x="193" y="944" width="8" height="1" fill="#eeeeec"/>
<rect x="201" y="944" width="8" height="1" fill="#eeeeec"/>
<rect x="209" y="944" width="8" height="1" fill="#eeeeec"/>
<rect x="217" y="944" width="8" height="1" fill="#eeeeec"/>
<rect x="225" y="944" width="8" height="1" fill="#eeeeec"/>
<rect x="233" y="944" width="8" height="1" fill="#eeeeec"/>
<rect x="241" y="944" width="8" height="1" fill="#eeeeec"/>
<rect x="249" y="944" width="8" height="1" fill="#eeeeec"/>
<rect x="257" y="944" width="8" height="1" fill="#eeeeec"/>
<rect x="265" y="944" width="8" height="1" fill="#eeeeec"/>
<rect x="273" y="944" width="8" height="1" fill="#eeeeec"/>
<rect x="281" y="944" width="8" height="1" fill="#eeeeec"/>
<rect x="289" y="944" width="8" height="1" fill="#eeeeec"/>
<rect x="297" y="944" width="8" height="1" fill="#eeeeec"/>
<rect x="305" y="944" width="8" height="1" fill="#eeeeec"/>
<rect x="313" y="944" width="8" height="1" fill="#eeeeec"/>
<rect x="321" y="944" width="8" height="1" fill="#eeeeec"/>
<rect x="329" y="944" width="8" height="1" fill="#eeeeec"/>
<rect x="337" y="944" width="8" height="1" fill="#eeeeec"/>
<rect x="345" y="944" width="8" height="1" fill="#eeeeec"/>
<rect x="353" y="944" width="8" height="1" fill="#eeeeec"/>
<rect x="361" y="944" width="8" height="1" fill="#eeeeec"/>
<rect x="369" y="944" width="8" height="1" fill="#eeeeec"/>
<rect x="377" y="944" width="8" height="1" fill="#eeeeec"/>
<rect x="385" y="944" width="8" height="1" fill="#eeeeec"/>
<rect x="393" y="944" width="8" height="1" fill="#eeeeec"/>
<rect x="401" y="944" width="8" height="1" fill="#eeeeec"/>
<rect x="409" y="944" width="8" height="1" fill="#eeeeec"/>
<rect x="417" y="944" width="8" height="1" fill="#eeeeec"/>
<rect x="425" y="944" width="8" height="1" fill="#eeeeec"/>
<rect x="433" y="944" width="8" height="1" fill="#eeeeec"/>
<rect x="441" y="944" width="8" height="1" fill="#eeeeec"/>
<rect x="449" y="944" width="8" height="1" fill="#eeeeec"/>
<rect x="457" y="944" width="8" height="1" fill="#eeeeec"/>
<rect x="465" y="944" width="8" height="1" fill="#eeeeec"/>
<rect x="473" y="944" width="8" height="1" fill="#eeeeec"/>
<rect x="481" y="944" width="8" height="1" fill="#eeeeec"/>
<rect x="489" y="944" width="8" height="1" fill="#eeeeec"/>
<rect x="497" y="944" width="8" height="1" fill="#eeeeec"/>
<rect x="505" y="944" width="8" height="1" fill="#eeeeec"/>
<rect x="513" y="944" width="8" height="1" fill="#eeeeec"/>
<rect x="521" y="944" width="8" height="1" fill="#eeeeec"/>
<rect x="529" y="944" width="8" height="1" fill="#eeeeec"/>
<rect x="537" y="944" width="8" height="1" fill="#eeeeec"/>
<rect x="545" y="944" width="8" height="1" fill="#eeeeec"/>
<rect x="553" y="944" width="8" height="1" fill="#eeeeec"/>
<rect x="561" y="944" width="8" height="1" fill="#eeeeec"/>
<rect x="569" y="944" width="8" height="1" fill="#eeeeec"/>
<rect x="577" y="944" width="8" height="1" fill="#eeeeec"/>
<rect x="585" y="944" width="8" height="1" fill="#eeeeec"/>
<rect x="593" y="944" width="8" height="1" fill="#eeeeec"/>
<rect x="601" y="944" width="8" height="1" fill="#eeeeec"/>
<rect x="609" y="944" width="8" height="1" fill="#eeeeec"/>
<rect x="617" y="944" width="8" height="1" fill="#eeeeec"/>
<rect x="625" y="944" width="8" height="1" fill="#eeeeec"/>
<rect x="633" y="944" width="8" height="1" fill="#eeeeec"/>
<rect x="641" y="944" width="8" height="1" fill="#eeeeec"/>
<rect x="649" y="944" width="8" height="1" fill="#eeeeec"/>
<rect x="657" y="944" width="8" height="1" fill="#eeeeec"/>
<rect x="665" y="944" width="8" height="1" fill="#eeeeec"/>
<rect x="673" y="944" width="8" height="1" fill="#eeeeec"/>
<rect x="681" y="944" width="8" height="1" fill="#eeeeec"/>
<rect x="689" y="944" width="8" height="1" fill="#eeeeec"/>
<rect x="697" y="944" width="8" height="1" fill="#eeeeec"/>
<rect x="705" y="944" width="8" height="1" fill="#eeeeec"/>
<rect x="713" y="944" width="8" height="1" fill="#eeeeec"/>
<rect x="721" y="944" width="8" height="1" fill="#eeeeec"/>
<rect x="729" y="944" width="8" height="1" fill="#eeeeec"/>
<rect x="737" y="944" width="8" height="1" fill="#eeeeec"/>
<rect x="745" y="944" width="8" height="1" fill="#eeeeec"/>
<rect x="753" y="944" width="8" height="1" fill="#eeeeec"/>
<rect x="761" y="944" width="8" height="1" fill="#eeeeec"/>
<rect x="769" y="944" width="8" height="1" fill="#eeeeec"/>
<rect x="777" y="944" width="8" height="1" fill="#eeeeec"/>
<rect x="785" y="944" width="8" height="1" fill="#eeeeec"/>
<rect x="793" y="944" width="8" height="1" fill="#eeeeec"/>
<rect x="801" y="944" width="8" height="1" fill="#eeeeec"/>
<rect x="809" y="944" width="8" height="1" fill="#eeeeec"/>
<rect x="817" y="944" width="8" height="1" fill="#eeeeec"/>
<rect x="825" y="944" width="8" height="1" fill="#eeeeec"/>
<rect x="833" y="944" width="8" height="1" fill="#eeeeec"/>
<rect x="841" y="944" width="8" height="1" fill="#eeeeec"/>
<rect x="849" y="944" width="8" height="1" fill="#eeeeec"/>
<rect x="857" y="944" width="8" height="1" fill="#eeeeec"/>
<rect x="865" y="944" width="8" height="1" fill="#eeeeec"/>
<rect x="873" y="944" width="8" height="1" fill="#eeeeec"/>
<rect x="881" y="944" width="8" height="1" fill="#eeeeec"/>
<rect x="889" y="944" width="8" height="1" fill="#eeeeec"/>
<rect x="897" y="944" width="8" height="1" fill="#eeeeec"/>
<rect x="905" y="944" width="8" height="1" fill="#eeeeec"/>
<rect x="913" y="944" width="8" height="1" fill="#eeeeec"/>
<rect x="921" y="944" width="8" height="1" fill="#eeeeec"/>
<rect x="929" y="944" width="8" height="1" fill="#eeeeec"/>
<rect x="937" y="944" width="8" height="1" fill="#eeeeec"/>
<rect x="1237" y="935" width="1" height="18" fill="#eeeeec"/>
<rect x="1269" y="935" width="1" height="18" fill="#eeeeec"/>
<rect x="1333" y="935" width="1" height="18" fill="#eeeeec"/>
<rect x="1334" y="944" width="3" height="1" fill="#eeeeec"/>
<rect x="1337" y="944" width="8" height="1" fill="#eeeeec"/>
<rect x="1345" y="944" width="8" height="1" fill="#eeeeec"/>
<rect x="1237" y="953" width="1" height="18" fill="#eeeeec"/>
<rect x="1269" y="953" width="1" height="18" fill="#eeeeec"/>
<rect x="1333" y="953" width="1" height="18" fill="#eeeeec"/>
<rect x="1334" y="962" width="3" height="1" fill="#eeeeec"/>
<rect x="1337" y="962" width="8" height="1" fill="#eeeeec"/>
<rect x="1345" y="962" width="8" height="1" fill="#eeeeec"/>
<rect x="1237" y="971" width="1" height="18" fill="#eeeeec"/>
<rect x="1269" y="971" width="1" height="18" fill="#eeeeec"/>
<rect x="1333" y="971" width="1" height="18" fill="#eeeeec"/>
<rect x="1334" y="980" width="3" height="1" fill="#eeeeec"/>
<rect x="1337" y="980" width="8" height="1" fill="#eeeeec"/>
<rect x="1345" y="980" width="8" height="1" fill="#eeeeec"/>
<rect x="1237" y="989" width="1" height="18" fill="#eeeeec"/>
<rect x="1269" y="989" width="1" height="18" fill="#eeeeec"/>
<rect x="1333" y="989" width="1" height="18" fill="#eeeeec"/>
<rect x="1334" y="998" width="3" height="1" fill="#eeeeec"/>
<rect x="1337" y="998" width="8" height="1" fill="#eeeeec"/>
<rect x="1345" y="998" width="8" height="1" fill="#eeeeec"/>
<rect x="1237" y="1007" width="1" height="18" fill="#eeeeec"/>
<rect x="1269" y="1007" width="1" height="18" fill="#eeeeec"/>
<rect x="1333" y="1007" width="1" height="10" fill="#eeeeec"/>
<rect x="1334" y="1016" width="3" height="1" fill="#eeeeec"/>
<rect x="1337" y="1016" width="8" height="1" fill="#eeeeec"/>
<rect x="1345" y="1016" width="8" height="1" fill="#eeeeec"/>
<rect x="1" y="1025" width="1" height="18" fill="#2d2d2d"/>
<rect x="73" y="1025" width="1" height="18" fill="#2d2d2d"/>
<rect x="209" y="1025" width="1" height="18" fill="#2d2d2d"/>
<rect x="297" y="1025" width="1" height="18" fill="#eeeeec"/>
<rect x="481" y="1025" width="1" height="18" fill="#2d2d2d"/>
<rect x="705" y="1025" width="1" height="18" fill="#2d2d2d"/>
</svg>
<div id="txt" style="position:absolute;left:0;top:0;width:1920px;height:1053px;will-change:transform">
<div class="row" style="top:89px"><span class="b">    Layers                                                                                                            </span>   <span class="b">Current Layer Contents</span></div>
<div class="row" style="top:107px">Cmp   Size  Command                                                                                                    Permission     UID:GID       Size  Filetree</div>
<div class="row" style="top:125px"><span class="b">   </span><span class="b" style="color:#2d2d2d"> 205 MB  FROM 4468e6d912c76d5</span>                                                                                       -rwxrwxrwx         0:0        0 B      bin   usr/bin</div>
<div class="row" style="top:143px">    7.1 kB                                                                                                             <span class="b" style="color:#2d2d2d">dr-xr-xr-x         0:0        0 B  </span>   <span style="color:#ffffff"> </span><span class="b" style="color:#2d2d2d">boot</span></div>
<div class="row" style="top:161px">     344 B  #(nop) COPY file:3ded3aeaa9a2fe0395fb395c1cbf8ec9c268c2ca356501c45dc36a3ac187579d in /etc/yum.repos.d/     drwxr-xr-x         0:0        0 B      dev</div>
<div class="row" style="top:179px">    968 kB  #(nop) COPY dir:7055408c62037a479fdb983674224ae0cfa42e9be136e5432be325a268efe938 in /tmp/scripts/          drwxr-xr-x         0:0     1.9 MB      etc</div>
<div class="row" style="top:197px">    233 MB  #(nop) COPY multi:b9d19e75404dbb1483e41f7e531e244919b82e49d6d2beca2cb81887cf4371bd in /tmp/artifacts/      -rw-------         0:0        0 B          .pwd.lock</div>
<div class="row" style="top:215px">    530 MB  yum --setopt=tsflags=nodocs install -y unzip tar rsync shadow-utils     &amp;&amp; rpm -q unzip tar rsync shadow-u -rw-r--r--         0:0     5.1 kB          DIR_COLORS</div>
<div class="row" style="top:233px">     70 kB  [ "bash", "-x", "/tmp/scripts/jboss.container.user/configure.sh" ]                                         -rw-r--r--         0:0     5.7 kB          DIR_COLORS.256color</div>
<div class="row" style="top:251px">    249 MB  yum --setopt=tsflags=nodocs install -y java-1.8.0-openjdk-devel     &amp;&amp; rpm -q java-1.8.0-openjdk-devel     -rw-r--r--         0:0     4.7 kB          DIR_COLORS.lightbgcolor</div>
<div class="row" style="top:269px">     58 kB  [ "bash", "-x", "/tmp/scripts/jboss.container.openjdk.jdk/configure.sh" ]                                  -rw-r--r--         0:0       94 B          GREP_COLORS</div>
<div class="row" style="top:287px">     28 MB  yum --setopt=tsflags=nodocs install -y rh-maven35     &amp;&amp; rpm -q rh-maven35                                 drwxr-xr-x         0:0        0 B          X11</div>
<div class="row" style="top:305px">      66 B  [ "bash", "-x", "/tmp/scripts/jboss.container.maven.35.bash/configure.sh" ]                                drwxr-xr-x         0:0        0 B              applnk</div>
<div class="row" style="top:323px">       0 B  [ "bash", "-x", "/tmp/scripts/jboss.container.eap.setup/configure.sh" ]                                    drwxr-xr-x         0:0        0 B              fontpath.d</div>
<div class="row" style="top:341px">       0 B  [ "bash", "-x", "/tmp/scripts/eap-install-cleanup/install.sh" ]                                            drwxr-xr-x         0:0        0 B              xorg.conf.d</div>
<div class="row" style="top:359px">     10 kB  [ "bash", "-x", "/tmp/scripts/jboss.container.java.proxy.bash/configure.sh" ]                              -rw-r--r--         0:0       16 B          adjtime</div>
<div class="row" style="top:377px">       0 B  [ "bash", "-x", "/tmp/scripts/jboss.container.java.proxy.bash/backward_compatibility.sh" ]                 -rw-r--r--         0:0     1.5 kB          aliases</div>
<div class="row" style="top:395px">     21 kB  [ "bash", "-x", "/tmp/scripts/jboss.container.java.jvm.bash/configure.sh" ]                                drwxr-xr-x         0:0        0 B          alternatives</div>
<div class="row" style="top:413px">       0 B  [ "bash", "-x", "/tmp/scripts/jboss.container.java.jvm.bash/backward_compatibility.sh" ]                   -rwxrwxrwx         0:0        0 B              ld   /usr/bin/ld.bfd</div>
<div class="row" style="top:431px">    4.6 kB  [ "bash", "-x", "/tmp/scripts/jboss.container.util.logging.bash/configure.sh" ]                            -rwxrwxrwx         0:0        0 B              libnssckbi.so.x86_64   /usr/lib64/pkcs11/p11-kit-trust.so</div>
<div class="row" style="top:449px">       0 B  [ "bash", "-x", "/tmp/scripts/jboss.container.util.logging.bash/backward_compatibility.sh" ]               drwxr-xr-x         0:0      24 kB          bash_completion.d</div>
<div class="row" style="top:467px">     49 kB  [ "bash", "-x", "/tmp/scripts/jboss.container.maven.default.bash/configure.sh" ]                           -rw-r--r--         0:0     1.5 kB              rct</div>
<div class="row" style="top:485px">       0 B  [ "bash", "-x", "/tmp/scripts/jboss.container.maven.default.bash/backward_compatibility.sh" ]              -rw-r--r--         0:0      759 B              rhn-migrate-classic-to-rhsm</div>
<div class="row" style="top:503px">    4.4 kB  [ "bash", "-x", "/tmp/scripts/dynamic-resources/install.sh" ]                                              -rw-r--r--         0:0      817 B              rhsm-debug</div>
<div class="row" style="top:521px">     16 kB  [ "bash", "-x", "/tmp/scripts/jboss.container.s2i.core.bash/configure.sh" ]                                -rw-r--r--         0:0      601 B              rhsm-icon</div>
<div class="row" style="top:539px">     15 kB  [ "bash", "-x", "/tmp/scripts/jboss.container.maven.s2i.bash/configure.sh" ]                               -rw-r--r--         0:0      614 B              rhsmcertd</div>
<div class="row" style="top:557px">    103 kB  [ "bash", "-x", "/tmp/scripts/jboss.container.wildfly.s2i.bash/configure.sh" ]                             -rw-r--r--         0:0     8.1 kB              subscription-manager</div>
<div class="row" style="top:575px">    1.7 MB  yum --setopt=tsflags=nodocs install -y diffutils     &amp;&amp; rpm -q diffutils                                   -rw-r--r--         0:0      707 B              syspurpose</div>
<div class="row" style="top:593px">    2.4 kB  [ "bash", "-x", "/tmp/scripts/jboss.container.eap.s2i.galleon/configure.sh" ]                              -rw-r--r--         0:0      11 kB              yum-utils.bash</div>
<div class="row" style="top:611px">       0 B  [ "bash", "-x", "/tmp/scripts/jboss.container.eap.s2i.galleon/backward_compatibility.sh" ]                 -rw-r--r--         0:0     2.9 kB          bashrc</div>
<div class="row" style="top:629px">     56 kB  [ "bash", "-x", "/tmp/scripts/jboss.container.eap.galleon/configure.sh" ]                                  drwxr-xr-x         0:0        0 B          binfmt.d</div>
<div class="row" style="top:647px">     21 kB  [ "bash", "-x", "/tmp/scripts/jboss.container.eap.galleon.config.mp/configure.sh" ]                        drwxr-xr-x         0:0        0 B          chkconfig.d</div>
<div class="row" style="top:665px">    1.7 kB  [ "bash", "-x", "/tmp/scripts/jboss.container.eap.galleon.build-settings/configure.sh" ]                   drwxr-xr-x         0:0      256 B          cron.daily</div>
<div class="row" style="top:683px">     52 kB  [ "bash", "-x", "/tmp/scripts/jboss.container.eap.openshift.modules/configure.sh" ]                        -rwx------         0:0      256 B              rhsmd</div>
<div class="row" style="top:701px">     12 MB  [ "bash", "-x", "/tmp/scripts/os-eap-activemq-rar/configure.sh" ]                                          -rw-------         0:0        0 B          crypttab</div>
<div class="row" style="top:719px">     12 MB  [ "bash", "-x", "/tmp/scripts/jboss.container.eap.amq6/configure.sh" ]                                     -rw-r--r--         0:0     1.6 kB          csh.cshrc</div>
<div class="row" style="top:737px">    5.0 kB  [ "bash", "-x", "/tmp/scripts/os-eap-migration/configure.sh" ]                                             -rw-r--r--         0:0      866 B          csh.login</div>
<div class="row" style="top:755px">     16 MB  yum --setopt=tsflags=nodocs install -y hostname     &amp;&amp; rpm -q hostname                                     drwxr-xr-x         0:0      35 kB          dbus-1</div>
<div class="row" style="top:773px">     11 kB  [ "bash", "-x", "/tmp/scripts/jboss.container.eap.launch/configure.sh" ]                                   -rw-r--r--         0:0      838 B              session.conf</div>
<div class="row" style="top:791px">  <span class="b">Layer Details</span>                                                                                                        drwxr-xr-x         0:0        0 B              session.d</div>
<div class="row" style="top:809px">                                                                                                                       -rw-r--r--         0:0      833 B              system.conf</div>
<div class="row" style="top:827px"><span class="b">Tags:</span>   (unavailable)                                                                                                  drwxr-xr-x         0:0      33 kB              system.d</div>
<div class="row" style="top:845px"><span class="b">Id:</span>     4468e6d912c76d5b127f3554c3cd83b7dc07cce6107c6b916299ba76fa7d15ac.tar                                           -rw-r--r--         0:0     1.4 kB                  com.redhat.RHSM1.Facts.conf</div>
<div class="row" style="top:863px"><span class="b">Digest:</span> sha256:4468e6d912c76d5b127f3554c3cd83b7dc07cce6107c6b916299ba76fa7d15ac                                        -rw-r--r--         0:0     2.5 kB                  com.redhat.RHSM1.conf</div>
<div class="row" style="top:881px"><span class="b">Command:</span>                                                                                                               -rw-r--r--         0:0     1.4 kB                  com.redhat.SubscriptionManager.conf</div>
<div class="row" style="top:899px">                                                                                                                       -rw-r--r--         0:0      947 B                  org.freedesktop.hostname1.conf</div>
<div class="row" style="top:917px">                                                                                                                       -rw-r--r--         0:0     2.5 kB                  org.freedesktop.import1.conf</div>
<div class="row" style="top:935px">  <span class="b">Image Details</span>                                                                                                        -rw-r--r--         0:0      937 B                  org.freedesktop.locale1.conf</div>
<div class="row" style="top:953px">                                                                                                                       -rw-r--r--         0:0     8.5 kB                  org.freedesktop.login1.conf</div>
<div class="row" style="top:971px">                                                                                                                       -rw-r--r--         0:0     3.7 kB                  org.freedesktop.machine1.conf</div>
<div class="row" style="top:989px"><span class="b">Total Image size:</span> 1.9 GB                                                                                               -rw-r--r--         0:0      10 kB                  org.freedesktop.systemd1.conf</div>
<div class="row" style="top:1007px"><span class="b">Potential wasted space:</span> 624 MB                                                                                         -rw-r--r--         0:0      947 B                  org.freedesktop.timedate1.conf</div>
<div class="row" style="top:1025px"><span style="color:#2d2d2d"> </span><span class="b" style="color:#2d2d2d">^C</span><span style="color:#2d2d2d"> Quit  </span><span class="b" style="color:#2d2d2d">Tab</span><span style="color:#2d2d2d"> Switch view  </span><span class="b" style="color:#2d2d2d">^F</span><span style="color:#2d2d2d"> Filter  </span><span class="b" style="color:#dededc">^L</span><span style="color:#dededc"> Show layer changes  </span><span class="b" style="color:#2d2d2d">^A</span><span style="color:#2d2d2d"> Show aggregated changes</span></div>
</div>
<div style="position:absolute;left:1911px;top:91px;width:6px;height:959px;border-radius:3px;background:#a4a4a4"></div>
</body></html>
